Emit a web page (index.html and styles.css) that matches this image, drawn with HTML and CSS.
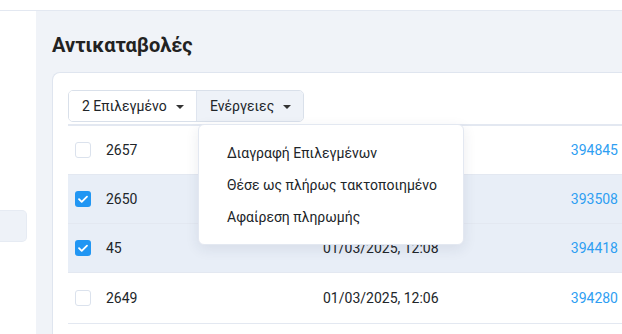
FILE: index.html
```html
<!DOCTYPE html>
<html lang="el">
<head>
<meta charset="utf-8">
<link rel="stylesheet" href="styles.css">
</head>
<body>
<div class="topbar"></div>
<div class="layout">
  <aside class="sidebar"><div class="side-item"></div></aside>
  <main class="main">
    <h1 class="title">Αντικαταβολές</h1>
    <section class="card">
      <div class="toolbar">
        <div class="btn-group">
          <button class="btn btn-sel">2 Επιλεγμένο <span class="caret"></span></button>
          <button class="btn btn-act">Ενέργειες <span class="caret"></span></button>
        </div>
        <ul class="menu">
          <li>Διαγραφή Επιλεγμένων</li>
          <li>Θέσε ως πλήρως τακτοποιημένο</li>
          <li>Αφαίρεση πληρωμής</li>
        </ul>
      </div>
      <table class="table">
        <tbody>
          <tr>
            <td class="c-check"><span class="cb"></span></td>
            <td class="c-id">2657</td>
            <td class="c-date"></td>
            <td class="c-link"><a>394845</a></td>
          </tr>
          <tr class="selected">
            <td class="c-check"><span class="cb checked"><svg viewBox="0 0 16 16" width="16" height="16"><path d="M4 8.2l2.7 2.7L12 5.6" fill="none" stroke="#fff" stroke-width="1.8" stroke-linecap="round" stroke-linejoin="round"/></svg></span></td>
            <td class="c-id">2650</td>
            <td class="c-date"></td>
            <td class="c-link"><a>393508</a></td>
          </tr>
          <tr class="selected">
            <td class="c-check"><span class="cb checked"><svg viewBox="0 0 16 16" width="16" height="16"><path d="M4 8.2l2.7 2.7L12 5.6" fill="none" stroke="#fff" stroke-width="1.8" stroke-linecap="round" stroke-linejoin="round"/></svg></span></td>
            <td class="c-id">45</td>
            <td class="c-date">01/03/2025, 12:08</td>
            <td class="c-link"><a>394418</a></td>
          </tr>
          <tr class="last">
            <td class="c-check"><span class="cb"></span></td>
            <td class="c-id">2649</td>
            <td class="c-date">01/03/2025, 12:06</td>
            <td class="c-link"><a>394280</a></td>
          </tr>
        </tbody>
      </table>
    </section>
  </main>
</div>
</body>
</html>
```

FILE: styles.css
```css
* { box-sizing: border-box; }
html, body { margin: 0; padding: 0; }
body {
  width: 622px;
  height: 334px;
  overflow: hidden;
  background: #f0f3f8;
  font-family: Roboto, "Noto Sans", sans-serif;
  color: #212529;
  font-size: 14px;
}
.topbar {
  height: 11px;
  background: #fff;
  border-bottom: 1px solid #e3e8f1;
}
.layout {
  display: flex;
  height: 323px;
  overflow: hidden;
}
.sidebar {
  width: 36px;
  flex: none;
  background: #fff;
  padding: 199px 9px 0 0;
}
.side-item {
  height: 32px;
  background: #eef2f8;
  border: 1px solid #e6ebf3;
  border-left: none;
  border-radius: 0 5px 5px 0;
}
.main {
  flex: none;
  width: 586px;
  padding: 22px 0 0 16px;
  overflow: hidden;
}
.title {
  margin: 0 0 15px;
  font-size: 20px;
  line-height: 24px;
  font-weight: 700;
  color: #222;
}
.card {
  background: #fff;
  border: 1px solid #dfe5ef;
  border-right: none;
  border-radius: 8px 0 0 0;
  padding: 17px 0 0 15px;
  height: 300px;
}
.toolbar {
  position: relative;
  height: 32px;
}
.btn-group {
  display: inline-flex;
  border: 1px solid #d9e0ea;
  border-radius: 5px;
  overflow: hidden;
  height: 32px;
}
.btn {
  font: inherit;
  font-size: 14px;
  color: #212529;
  border: none;
  margin: 0;
  display: flex;
  align-items: center;
  gap: 9px;
  height: 30px;
}
.btn-sel {
  background: #fff;
  width: 127px;
  padding: 0 0 0 13px;
}
.btn-act {
  background: #eef2f8;
  width: 107px;
  padding: 0 0 0 13px;
  border-left: 1px solid #dfe5ef;
}
.caret {
  width: 0;
  height: 0;
  border-left: 4px solid transparent;
  border-right: 4px solid transparent;
  border-top: 4px solid #333;
  margin-top: 1px;
}
.menu {
  position: absolute;
  left: 130px;
  top: 34px;
  width: 266px;
  margin: 0;
  padding: 12px 0 11px;
  list-style: none;
  background: #fff;
  border: 1px solid #e3e8f1;
  border-radius: 6px;
  box-shadow: 0 4px 14px rgba(30, 45, 80, 0.09);
  z-index: 5;
}
.menu li {
  height: 32px;
  line-height: 32px;
  padding-left: 28px;
  font-size: 14px;
  color: #212529;
}
.table {
  margin-top: 2px;
  border-collapse: collapse;
  border-top: 2px solid #e3e8f1;
  width: 570px;
}
.table td {
  height: 49px;
  padding: 0;
  border-bottom: 1px solid #e3e8f1;
  vertical-align: middle;
  font-size: 14px;
}
.table tr.last td { height: 51px; }
.table tr.selected td { background: #e8eef7; }
.c-check { width: 38px; padding-left: 7px !important; }
.c-id { width: 217px; }
.c-date { width: 200px; }
.c-link { text-align: right; padding-right: 20px !important; }
.c-link a { color: #2e9ef2; }
.cb {
  display: block;
  width: 16px;
  height: 16px;
  border: 1.5px solid #dbe2ed;
  border-radius: 3px;
  background: #fff;
}
.cb.checked {
  border: none;
  background: #2196f3;
}
.cb svg { display: block; }
```
